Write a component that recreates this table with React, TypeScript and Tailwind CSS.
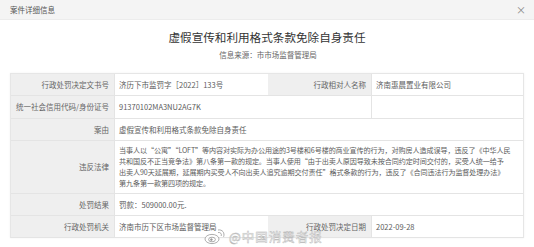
import React from 'react';

const font = { fontFamily: '"Noto Sans CJK SC", "Noto Sans", sans-serif' };

function Label({ children }: { children?: React.ReactNode }) {
  return (
    <div className="flex items-center justify-end bg-[#efefef] pr-[5px] text-[7.5px] text-[#666] border-b border-[#e4e4e4]">
      {children}
    </div>
  );
}

function Value({ children, className = '' }: { children?: React.ReactNode; className?: string }) {
  return (
    <div className={`flex items-center pl-[4px] pr-[4px] text-[7.5px] text-[#5c5c5c] border-b border-l border-[#e4e4e4] ${className}`}>
      {children}
    </div>
  );
}

function WeiboLogo() {
  return (
    <svg width="22" height="16" viewBox="0 0 22 16" fill="none" stroke="#999" strokeWidth="0.8">
      <ellipse cx="8" cy="10" rx="7" ry="4.6" fill="rgba(255,255,255,0.75)" />
      <ellipse cx="8" cy="10.5" rx="3.4" ry="2.3" />
      <circle cx="7.4" cy="10.6" r="0.9" fill="#999" />
      <path d="M14 3.5 C16.5 3 18 5 17.2 7" />
      <path d="M14 1 C18.5 0.2 21 4 19.6 7.8" />
    </svg>
  );
}

export default function App() {
  return (
    <div className="w-[534px] h-[247px] bg-white relative overflow-hidden" style={font}>
      <div className="h-[20px] bg-[#f4f4f4] border-b border-[#ececec] flex items-center justify-between pl-[10px] pr-[8px]">
        <span className="text-[7.5px] text-[#555]">案件详细信息</span>
        <span className="text-[10px] text-[#888] leading-none">×</span>
      </div>

      <div className="mt-[9px] text-center text-[11.6px] leading-[16px] text-[#333]">
        虚假宣传和利用格式条款免除自身责任
      </div>
      <div className="mt-[5px] text-center text-[7.5px] leading-[10px] text-[#666] pl-[2px]">
        信息来源：市市场监督管理局
      </div>

      <div className="mx-[10px] mt-[13px] w-[514px] border border-[#e6e6e6] border-b-0 shadow-[0_0_2px_rgba(0,0,0,0.06)] grid grid-cols-[103px_154px_103px_1fr]">
        <Label>行政处罚决定文书号</Label>
        <Value className="h-[22px]">济历下市监罚字［2022］133号</Value>
        <Label>行政相对人名称</Label>
        <Value>济南惠晨置业有限公司</Value>

        <Label>统一社会信用代码/身份证号</Label>
        <Value className="h-[23px] col-span-2">91370102MA3NU2AG7K</Value>
        <Value />

        <Label>案由</Label>
        <Value className="h-[22px] col-span-3">虚假宣传和利用格式条款免除自身责任</Value>

        <Label>违反法律</Label>
        <Value className="h-[53px] col-span-3 leading-[11px] whitespace-nowrap !text-[7.1px] tracking-[-0.1px]">
          <div>
            当事人以“公寓”“LOFT”等内容对实际为办公用途的3号楼和6号楼的商业宣传的行为，对购房人造成误导，违反了《中华人民
            <br />
            共和国反不正当竞争法》第八条第一款的规定。当事人使用“由于出卖人原因导致未按合同约定时间交付的，买受人统一给予
            <br />
            出卖人90天延展期，延展期内买受人不向出卖人追究逾期交付责任”格式条款的行为，违反了《合同违法行为监督处理办法》
            <br />
            第九条第一款第四项的规定。
          </div>
        </Value>

        <Label>处罚结果</Label>
        <Value className="h-[22px] col-span-3">罚款：509000.00元.</Value>

        <Label>行政处罚机关</Label>
        <Value className="h-[22px]">济南市历下区市场监督管理局</Value>
        <Label>行政处罚决定日期</Label>
        <Value>2022-09-28</Value>
      </div>

      <div className="absolute left-[204px] top-[229px] flex items-center gap-[3px]">
        <WeiboLogo />
        <span
          className="text-[12.5px] leading-none text-white/90 tracking-[1px]"
          style={{ WebkitTextStroke: '0.4px #b5b5b5', textShadow: '0 0 1px rgba(0,0,0,0.15)' }}
        >
          @中国消费者报
        </span>
      </div>
    </div>
  );
}
